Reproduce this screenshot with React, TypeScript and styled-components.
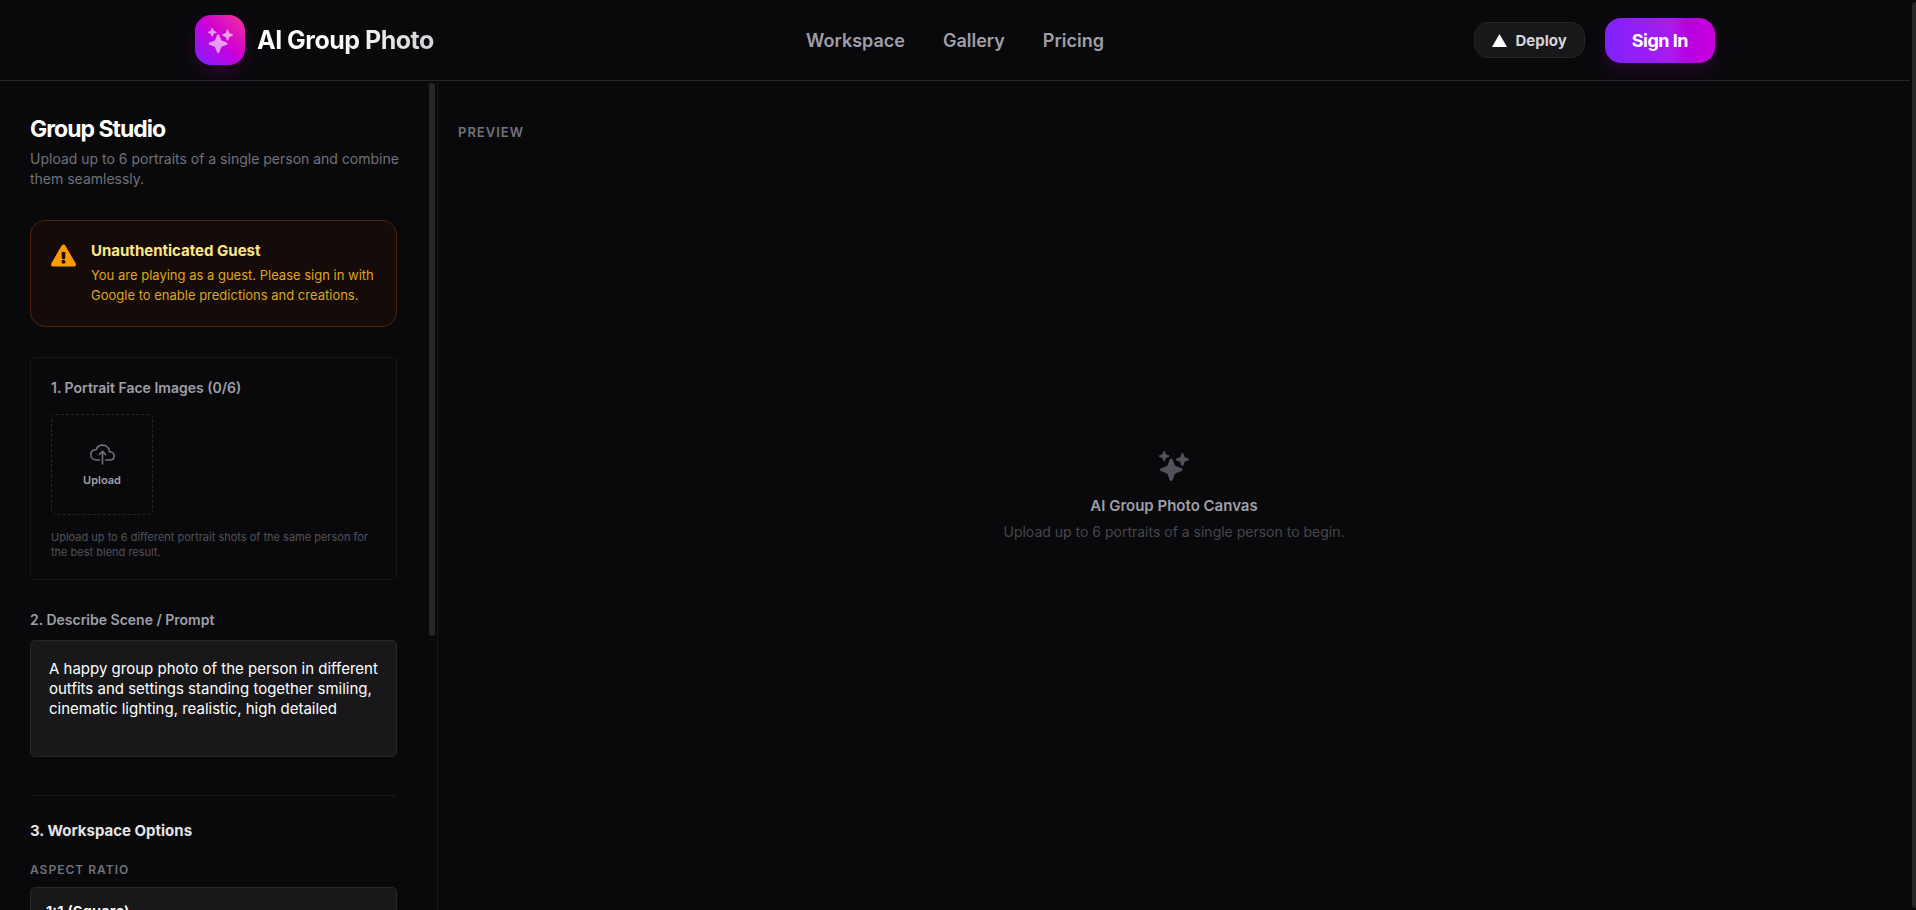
import React from "react";
import styled, { createGlobalStyle } from "styled-components";
import { FaExclamationTriangle } from "react-icons/fa";
import { IoCloudUploadOutline, IoSparkles } from "react-icons/io5";

const GlobalStyle = createGlobalStyle`
  * { box-sizing: border-box; }
  body {
    margin: 0;
    background: #09090b;
    color: #fff;
    font-family: Inter, "Liberation Sans", sans-serif;
  }
  button, select, textarea { font-family: inherit; }
  h1, h2, h3, p { margin: 0; }
`;

const Screen = styled.div`
  display: flex;
  height: 100vh;
  overflow: hidden;
`;

const Page = styled.div`
  flex: 1;
  min-width: 0;
  display: flex;
  flex-direction: column;
`;

const PageTrack = styled.div`
  width: 6px;
  padding: 2px 0 2px 2px;
`;

const PageThumb = styled.div`
  height: 100%;
  border-radius: 4px 0 0 4px;
  background: #27272a;
`;

const Header = styled.header`
  border-bottom: 1px solid #27272a;
  padding: 0 40px;
`;

const HeaderInner = styled.div`
  display: grid;
  grid-template-columns: 1fr auto 1fr;
  align-items: center;
  max-width: 1520px;
  height: 80px;
  margin: 0 auto;
`;

const Brand = styled.a`
  display: flex;
  align-items: center;
  gap: 12px;
  text-decoration: none;
`;

const Logo = styled.span`
  display: flex;
  align-items: center;
  justify-content: center;
  width: 50px;
  height: 50px;
  border-radius: 16px;
  background: linear-gradient(to top right, #7f22fe, #c800de 50%, #d000d0 55%, #f6339a);
  box-shadow: 0 8px 20px rgba(200, 0, 222, 0.15);
  color: rgba(255, 255, 255, 0.6);
  font-size: 25px;
`;

const BrandName = styled.span`
  background: linear-gradient(to right, #fff, #fff 40%, #d4d4d8);
  background-clip: text;
  -webkit-background-clip: text;
  color: transparent;
  font-size: 25px;
  font-weight: 700;
  letter-spacing: -0.5px;
`;

const Nav = styled.nav`
  display: flex;
  gap: 38px;
`;

const NavLink = styled.a`
  color: #9f9fa9;
  font-size: 18px;
  font-weight: 600;
  text-decoration: none;
`;

const Actions = styled.div`
  display: flex;
  align-items: center;
  justify-content: flex-end;
  gap: 20px;
`;

const DeployButton = styled.button`
  display: flex;
  align-items: center;
  gap: 8px;
  height: 36px;
  padding: 0 17px;
  border: 1px solid #27272a;
  border-radius: 14px;
  background: #18181b;
  color: #d4d4d8;
  font-size: 15px;
  font-weight: 700;
`;

const SignInButton = styled.button`
  height: 45px;
  padding: 0 27px;
  border: 0;
  border-radius: 16px;
  background: linear-gradient(to right, #7f22fe, #a81cea 60%, #b800e0 75%, #c800de);
  box-shadow: 0 8px 20px rgba(200, 0, 222, 0.15);
  color: #fff;
  font-size: 18px;
  font-weight: 700;
  letter-spacing: -0.5px;
`;

const Workspace = styled.div`
  flex: 1;
  min-height: 0;
  display: flex;
`;

const Sidebar = styled.aside`
  display: flex;
  flex-shrink: 0;
  width: 438px;
  border-right: 1px solid #18181b;
`;

const SidebarScroll = styled.div`
  flex: 1;
  min-width: 0;
  padding: 34px 30px;
  overflow-x: hidden;
  overflow-y: auto;
  scrollbar-width: none;
`;

const SidebarTrack = styled.div`
  width: 10px;
  padding: 2px;
`;

const SidebarThumb = styled.div`
  height: 67%;
  border-radius: 3px;
  background: #27272a;
`;

const StudioTitle = styled.h1`
  font-size: 23px;
  line-height: 28px;
  font-weight: 700;
  letter-spacing: -1px;
`;

const StudioText = styled.p`
  margin: 6px -10px 0 0;
  color: #71717b;
  font-size: 14px;
  line-height: 20px;
`;

const Notice = styled.div`
  display: flex;
  gap: 15px;
  margin-top: 31px;
  padding: 20px 20px 21px;
  border: 1px solid #51230b;
  border-radius: 15px;
  background: #150b09;
`;

const NoticeIcon = styled(FaExclamationTriangle)`
  flex-shrink: 0;
  margin-top: 2px;
  color: #fe9a00;
  font-size: 25px;
`;

const NoticeTitle = styled.h2`
  color: #fee685;
  font-size: 15px;
  line-height: 20px;
  font-weight: 700;
`;

const NoticeText = styled.p`
  margin-top: 4px;
  color: #dfa61f;
  font-size: 13px;
  line-height: 20px;
`;

const UploadCard = styled.section`
  margin-top: 30px;
  padding: 20px;
  border: 1px solid #18181b;
  border-radius: 5px;
`;

const FieldTitle = styled.h3`
  color: #9f9fa9;
  font-size: 14px;
  line-height: 20px;
  font-weight: 600;
`;

const UploadButton = styled.button`
  display: flex;
  flex-direction: column;
  align-items: center;
  justify-content: center;
  gap: 6px;
  width: 102px;
  height: 101px;
  margin-top: 16px;
  padding: 0;
  border: 1px dashed #27272a;
  border-radius: 5px;
  background: transparent;
  color: #9f9fa9;
  font-size: 11px;
  font-weight: 600;

  svg {
    color: #71717b;
    font-size: 25px;
  }
`;

const UploadHint = styled.p`
  margin: 15px 0 -1px;
  color: #52525c;
  font-size: 11px;
  line-height: 15px;
`;

const FieldLabel = styled.label`
  display: block;
  margin-top: 30px;
  color: #9f9fa9;
  font-size: 14px;
  line-height: 20px;
  font-weight: 600;
`;

const PromptBox = styled.textarea`
  display: block;
  width: 100%;
  height: 117px;
  margin-top: 10px;
  padding: 18px;
  border: 1px solid #27272a;
  border-radius: 5px;
  background: #18181b;
  color: #fff;
  font-size: 15px;
  line-height: 20px;
  resize: none;
`;

const Options = styled.section`
  margin-top: 38px;
  padding: 25px 0 320px;
  border-top: 1px solid #18181b;
`;

const OptionsTitle = styled.h2`
  color: #e4e4e7;
  font-size: 15px;
  line-height: 20px;
  font-weight: 700;
`;

const OptionLabel = styled.label`
  display: block;
  margin: 20px 0 8px;
  color: #71717b;
  font-size: 12px;
  line-height: 18px;
  font-weight: 600;
  letter-spacing: 1px;
`;

const OptionSelect = styled.select`
  appearance: none;
  display: block;
  width: 100%;
  height: 48px;
  padding: 0 15px;
  border: 1px solid #27272a;
  border-radius: 5px;
  background: #18181b;
  color: #fff;
  font-size: 15px;
  font-weight: 600;
`;

const Preview = styled.main`
  flex: 1;
  display: flex;
  flex-direction: column;
  padding: 41px 20px 40px;
`;

const PreviewTitle = styled.h2`
  color: #71717b;
  font-size: 13px;
  line-height: 20px;
  font-weight: 600;
  letter-spacing: 1px;
`;

const Empty = styled.div`
  flex: 1;
  display: flex;
  flex-direction: column;
  align-items: center;
  justify-content: center;
  padding-bottom: 20px;
`;

const EmptyIcon = styled(IoSparkles)`
  color: #52525c;
  font-size: 30px;
`;

const EmptyTitle = styled.h3`
  margin-top: 13px;
  color: #9f9fa9;
  font-size: 15px;
  line-height: 24px;
  font-weight: 600;
`;

const EmptyText = styled.p`
  margin-top: 4px;
  color: #46464e;
  font-size: 14px;
  line-height: 20px;
`;

export default function App() {
  return (
    <>
      <GlobalStyle />
      <Screen>
        <Page>
          <Header>
            <HeaderInner>
              <Brand href="#">
                <Logo><IoSparkles /></Logo>
                <BrandName>AI Group Photo</BrandName>
              </Brand>
              <Nav>
                <NavLink href="#workspace">Workspace</NavLink>
                <NavLink href="#gallery">Gallery</NavLink>
                <NavLink href="#pricing">Pricing</NavLink>
              </Nav>
              <Actions>
                <DeployButton type="button">
                  <svg width="15" height="13" viewBox="0 0 15 13" aria-hidden="true">
                    <path d="M7.5 0 15 13H0Z" fill="#fff" />
                  </svg>
                  Deploy
                </DeployButton>
                <SignInButton type="button">Sign In</SignInButton>
              </Actions>
            </HeaderInner>
          </Header>
          <Workspace>
            <Sidebar>
              <SidebarScroll>
                <StudioTitle>Group Studio</StudioTitle>
                <StudioText>
                  Upload up to 6 portraits of a single person and combine them seamlessly.
                </StudioText>
                <Notice>
                  <NoticeIcon />
                  <div>
                    <NoticeTitle>Unauthenticated Guest</NoticeTitle>
                    <NoticeText>
                      You are playing as a guest. Please sign in with Google to enable predictions and creations.
                    </NoticeText>
                  </div>
                </Notice>
                <UploadCard>
                  <FieldTitle>1. Portrait Face Images (0/6)</FieldTitle>
                  <UploadButton type="button">
                    <IoCloudUploadOutline />
                    Upload
                  </UploadButton>
                  <UploadHint>
                    Upload up to 6 different portrait shots of the same person for the best blend result.
                  </UploadHint>
                </UploadCard>
                <FieldLabel htmlFor="prompt">2. Describe Scene / Prompt</FieldLabel>
                <PromptBox
                  id="prompt"
                  defaultValue="A happy group photo of the person in different outfits and settings standing together smiling, cinematic lighting, realistic, high detailed"
                />
                <Options>
                  <OptionsTitle>3. Workspace Options</OptionsTitle>
                  <OptionLabel htmlFor="ratio">ASPECT RATIO</OptionLabel>
                  <OptionSelect id="ratio">
                    <option>1:1 (Square)</option>
                  </OptionSelect>
                </Options>
              </SidebarScroll>
              <SidebarTrack><SidebarThumb /></SidebarTrack>
            </Sidebar>
            <Preview>
              <PreviewTitle>PREVIEW</PreviewTitle>
              <Empty>
                <EmptyIcon />
                <EmptyTitle>AI Group Photo Canvas</EmptyTitle>
                <EmptyText>Upload up to 6 portraits of a single person to begin.</EmptyText>
              </Empty>
            </Preview>
          </Workspace>
        </Page>
        <PageTrack><PageThumb /></PageTrack>
      </Screen>
    </>
  );
}
